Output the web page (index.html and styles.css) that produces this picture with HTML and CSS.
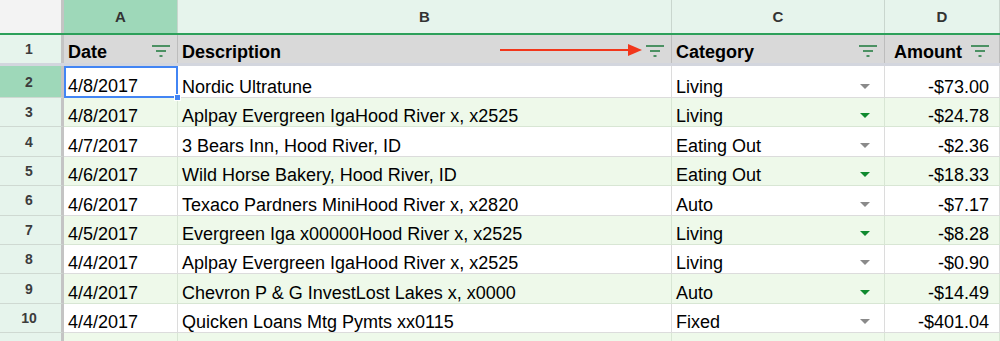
FILE: index.html
```html
<!DOCTYPE html>
<html lang="en">
<head>
    <meta charset="UTF-8">
    <title>Budget - Sheet</title>
    <link rel="stylesheet" href="styles.css">
</head>
<body>
    <div class="sheet">
        <!-- column letters -->
        <div class="row col-heads">
            <div class="corner"></div>
            <div class="col-head active">A</div>
            <div class="col-head">B</div>
            <div class="col-head">C</div>
            <div class="col-head">D</div>
        </div>

        <!-- frozen header row -->
        <div class="row head-row">
            <div class="row-num">1</div>
            <div class="cell head">Date <svg class="filter" width="18" height="12" viewBox="0 0 18 12"><path d="M0 1h18M4 6h10M7.5 11h3" stroke="currentColor" stroke-width="1.6"/></svg></div>
            <div class="cell head desc-head">Description
                <svg class="filter" width="18" height="12" viewBox="0 0 18 12"><path d="M0 1h18M4 6h10M7.5 11h3" stroke="currentColor" stroke-width="1.6"/></svg>
                <svg class="arrow" width="142" height="14" viewBox="0 0 142 14"><path d="M0 7h130" stroke="#f2361b" stroke-width="2.2"/><path d="M128 1l14 6-14 6z" fill="#f2361b"/></svg>
            </div>
            <div class="cell head">Category <svg class="filter" width="18" height="12" viewBox="0 0 18 12"><path d="M0 1h18M4 6h10M7.5 11h3" stroke="currentColor" stroke-width="1.6"/></svg></div>
            <div class="cell head amount-head">Amount <svg class="filter" width="18" height="12" viewBox="0 0 18 12"><path d="M0 1h18M4 6h10M7.5 11h3" stroke="currentColor" stroke-width="1.6"/></svg></div>
        </div>

        <div class="row data first">
            <div class="row-num active">2</div>
            <div class="cell selected">4/8/2017<span class="handle"></span></div>
            <div class="cell">Nordic Ultratune</div>
            <div class="cell cat">Living <span class="drop"></span></div>
            <div class="cell num">-$73.00</div>
        </div>
        <div class="row data alt">
            <div class="row-num">3</div>
            <div class="cell">4/8/2017</div>
            <div class="cell">Aplpay Evergreen IgaHood River x, x2525</div>
            <div class="cell cat">Living <span class="drop"></span></div>
            <div class="cell num">-$24.78</div>
        </div>
        <div class="row data">
            <div class="row-num">4</div>
            <div class="cell">4/7/2017</div>
            <div class="cell">3 Bears Inn, Hood River, ID</div>
            <div class="cell cat">Eating Out <span class="drop"></span></div>
            <div class="cell num">-$2.36</div>
        </div>
        <div class="row data alt">
            <div class="row-num">5</div>
            <div class="cell">4/6/2017</div>
            <div class="cell">Wild Horse Bakery, Hood River, ID</div>
            <div class="cell cat">Eating Out <span class="drop"></span></div>
            <div class="cell num">-$18.33</div>
        </div>
        <div class="row data">
            <div class="row-num">6</div>
            <div class="cell">4/6/2017</div>
            <div class="cell">Texaco Pardners MiniHood River x, x2820</div>
            <div class="cell cat">Auto <span class="drop"></span></div>
            <div class="cell num">-$7.17</div>
        </div>
        <div class="row data alt">
            <div class="row-num">7</div>
            <div class="cell">4/5/2017</div>
            <div class="cell">Evergreen Iga x00000Hood River x, x2525</div>
            <div class="cell cat">Living <span class="drop"></span></div>
            <div class="cell num">-$8.28</div>
        </div>
        <div class="row data">
            <div class="row-num">8</div>
            <div class="cell">4/4/2017</div>
            <div class="cell">Aplpay Evergreen IgaHood River x, x2525</div>
            <div class="cell cat">Living <span class="drop"></span></div>
            <div class="cell num">-$0.90</div>
        </div>
        <div class="row data alt">
            <div class="row-num">9</div>
            <div class="cell">4/4/2017</div>
            <div class="cell">Chevron P &amp; G InvestLost Lakes x, x0000</div>
            <div class="cell cat">Auto <span class="drop"></span></div>
            <div class="cell num">-$14.49</div>
        </div>
        <div class="row data">
            <div class="row-num">10</div>
            <div class="cell">4/4/2017</div>
            <div class="cell">Quicken Loans Mtg Pymts xx0115</div>
            <div class="cell cat">Fixed <span class="drop"></span></div>
            <div class="cell num">-$401.04</div>
        </div>
        <div class="row data alt">
            <div class="row-num"></div>
            <div class="cell"></div>
            <div class="cell"></div>
            <div class="cell cat"></div>
            <div class="cell num"></div>
        </div>
    </div>
</body>
</html>
```

FILE: styles.css
```css
* {
    margin: 0;
    padding: 0;
    box-sizing: border-box;
}

body {
    font-family: 'Liberation Sans', Arial, sans-serif;
    background: #ffffff;
    color: #000000;
    overflow: hidden;
}

.sheet {
    width: 1000px;
}

.row {
    display: grid;
    grid-template-columns: 64px 114px 494px 213px 115px;
}

/* column letters */
.col-heads {
    height: 35px;
    border-bottom: 2px solid #2da05a;
}

.corner {
    background: #f3f3f3;
    border-right: 3px solid #c4c4c4;
}

.col-head {
    background: #e6f4ec;
    border-right: 1px solid #c9d6ce;
    display: flex;
    align-items: center;
    justify-content: center;
    font-size: 15px;
    font-weight: bold;
    color: #333333;
    padding-bottom: 1px;
}

.col-head.active {
    background: #9ed8b9;
}

/* row numbers */
.row-num {
    background: #e6f4ec;
    border-right: 3px solid #c4c4c4;
    border-bottom: 1px solid #cfd9d2;
    display: flex;
    align-items: center;
    justify-content: center;
    font-size: 14px;
    font-weight: bold;
    color: #3c3c3c;
    padding-right: 3px;
}

.row-num.active {
    background: #9ed8b9;
}

/* header row */
.head-row {
    height: 31px;
    border-bottom: 3px solid #d3d6de;
}

.head-row .row-num {
    border-bottom: none;
}

.cell {
    display: flex;
    align-items: flex-end;
    font-size: 18px;
    line-height: 20px;
    padding: 0 5px 0 4px;
    border-right: 1px solid #dcdcdc;
    border-bottom: 1px solid #dcdcdc;
    white-space: nowrap;
    position: relative;
}

.cell.head {
    background: #d9d9d9;
    font-weight: bold;
    border-right: 1px solid #bdbdbd;
    border-bottom: none;
    justify-content: space-between;
    padding-bottom: 1px;
    padding-right: 7px;
}

.cell.head .filter {
    color: #1e7a3c;
    margin-bottom: 5px;
    flex-shrink: 0;
}

.desc-head {
    position: relative;
}

.arrow {
    position: absolute;
    left: 322px;
    top: 8px;
}

.amount-head {
    justify-content: flex-end !important;
    gap: 9px;
    padding-right: 10px !important;
}

/* data rows */
.data {
    height: 29.4px;
}

.data.first {
    height: 32px;
}

.data.alt .cell {
    background: #eef9ea;
    border-color: #d8e6d4;
}

.cell.num {
    justify-content: flex-end;
    padding-right: 10px;
}

.cell.cat {
    justify-content: space-between;
    padding-right: 14px;
}

.drop {
    width: 0;
    height: 0;
    border-left: 5px solid transparent;
    border-right: 5px solid transparent;
    border-top: 5px solid #8a8a8a;
    margin-bottom: 8px;
}

.data.alt .drop {
    border-top-color: #0f8a2e;
}

.cell.selected {
    border: 2px solid #4285f4;
    padding-left: 2px;
    padding-bottom: 0;
}

.handle {
    position: absolute;
    right: -5px;
    bottom: -5px;
    width: 7px;
    height: 7px;
    background: #4285f4;
    border: 1px solid #ffffff;
    z-index: 2;
}
```
